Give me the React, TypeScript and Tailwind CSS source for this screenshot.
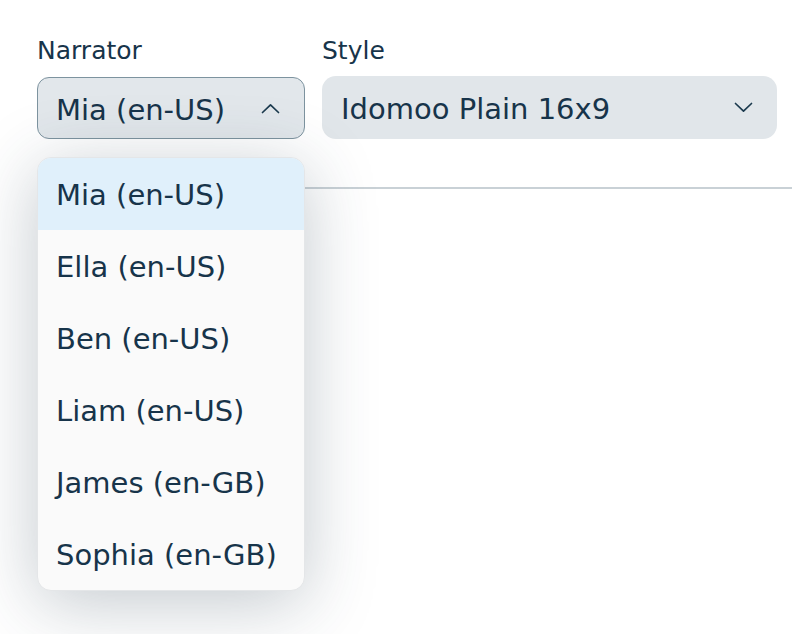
import React from "react";

const narrators = [
  "Mia (en-US)",
  "Ella (en-US)",
  "Ben (en-US)",
  "Liam (en-US)",
  "James (en-GB)",
  "Sophia (en-GB)",
];

const Chevron = ({ up }: { up?: boolean }) => (
  <svg width="19" height="11" viewBox="0 0 19 11" fill="none">
    <path
      d={up ? "M1.5 9.5L9.5 1.8l8 7.7" : "M1.5 1.5L9.5 9.2l8-7.7"}
      stroke="#1b3a4e"
      strokeWidth="1.7"
      strokeLinecap="round"
      strokeLinejoin="round"
    />
  </svg>
);

export default function App() {
  const selected = "Mia (en-US)";

  return (
    <div
      className="w-[792px] h-[634px] bg-white text-[#17344a] overflow-hidden"
      style={{ fontFamily: "'DejaVu Sans', Lato, sans-serif" }}
    >
      <div className="pl-[37px] pr-[15px] pt-[36px]">
        <div className="flex gap-[17px]">
          {/* Narrator */}
          <div className="w-[268px] relative">
            <div className="text-[25px] leading-[30px] mb-[11px]">Narrator</div>
            <button className="w-full h-[62px] rounded-[12px] border border-[#7d939f] bg-[#e2e7eb] flex items-center justify-between pl-[18px] pr-[24px]">
              <span className="text-[29px] pt-[5px]">{selected}</span>
              <Chevron up />
            </button>
            {/* menu */}
            <div className="absolute left-0 top-[121px] w-[268px] z-10 bg-[#fafafa] rounded-[14px] border border-[#e4e6e8] overflow-hidden shadow-[0_12px_70px_rgba(40,60,80,0.28)]">
              {narrators.map((n) => (
                <div
                  key={n}
                  className={
                    "h-[72px] flex items-center pl-[18px] pt-[4px] text-[29px] " +
                    (n === selected ? "bg-[#e0f0fb]" : "")
                  }
                >
                  {n}
                </div>
              ))}
            </div>
          </div>

          {/* Style */}
          <div className="flex-1">
            <div className="text-[25px] leading-[30px] mb-[10px]">Style</div>
            <button className="w-full h-[63px] rounded-[14px] bg-[#e1e6ea] flex items-center justify-between pl-[19px] pr-[24px]">
              <span className="text-[29px] pt-[5px]">Idomoo Plain 16x9</span>
              <Chevron />
            </button>
          </div>
        </div>
        <div className="mt-[48px] h-[2px] bg-[#c9d1d6] -mr-[15px]" />
      </div>
    </div>
  );
}
